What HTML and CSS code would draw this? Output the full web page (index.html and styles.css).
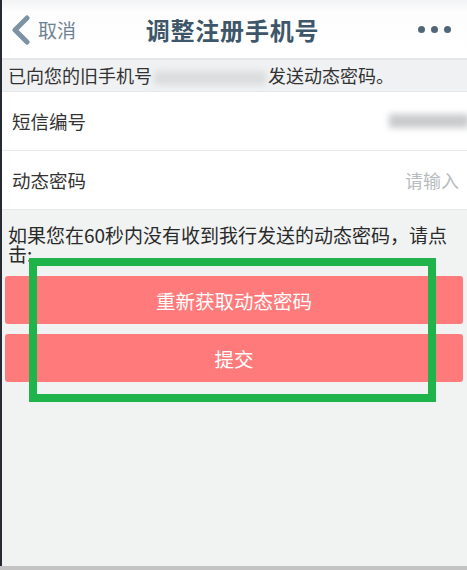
FILE: index.html
```html
<!DOCTYPE html>
<html lang="zh-CN">
<head>
    <meta charset="UTF-8">
    <meta name="viewport" content="width=device-width, initial-scale=1.0">
    <title>调整注册手机号</title>
    <link rel="stylesheet" href="styles.css">
</head>
<body>
    <div class="screen">
        <div class="navbar">
            <div class="nav-back">
                <svg class="chevron" width="22" height="30" viewBox="0 0 22 30">
                    <path d="M17 3 L5 15 L17 27" fill="none" stroke="#7d93a3" stroke-width="5" stroke-linecap="round" stroke-linejoin="round"/>
                </svg>
                <span>取消</span>
            </div>
            <div class="nav-title">调整注册手机号</div>
            <div class="nav-more"><i></i><i></i><i></i></div>
        </div>

        <div class="notice">已向您的旧手机号<span class="mask mask-phone"></span>发送动态密码。</div>

        <div class="form">
            <div class="row">
                <span class="label">短信编号</span>
                <span class="mask mask-code"></span>
            </div>
            <div class="row">
                <span class="label">动态密码</span>
                <span class="placeholder">请输入</span>
            </div>
        </div>

        <p class="tip">如果您在60秒内没有收到我行发送的动态密码，请点击:</p>

        <div class="actions">
            <button class="btn">重新获取动态密码</button>
            <button class="btn">提交</button>
        </div>

        <div class="highlight"></div>
    </div>
    <div class="bottom-bar"></div>
</body>
</html>
```

FILE: styles.css
```css
body { margin: 0; font-family: "Noto Sans CJK SC", "Noto Sans", sans-serif; background: #f1f2f2; color: #333; }
.screen { position: relative; height: 566px; border-left: 2px solid #262a33; background: #f1f2f2; overflow: hidden; }
.bottom-bar { height: 4px; background: #c3c3c3; }

.navbar { height: 58px; display: flex; align-items: center; justify-content: space-between; background: linear-gradient(#f2f3f4, #fdfdfd 12px, #fff); border-bottom: 2px solid #e4e7ea; padding: 0 12px 0 8px; }
.nav-back { display: flex; align-items: center; gap: 6px; color: #6e8392; font-size: 19px; width: 100px; }
.chevron { margin-top: 1px; }
.nav-title { font-size: 24px; font-weight: bold; color: #3d5669; letter-spacing: 0.8px; margin-left: 4px; }
.nav-more { width: 100px; display: flex; justify-content: flex-end; gap: 6px; padding-right: 4px; }
.nav-more i { width: 7px; height: 7px; border-radius: 50%; background: #506779; }

.notice { height: 31px; line-height: 30px; font-size: 18px; padding-left: 6px; background: #f0f1f2; border-bottom: 1px solid #e6e8e9; white-space: nowrap; }
.mask { display: inline-block; vertical-align: middle; background: #d2d4d6; filter: blur(3px); }
.mask-phone { width: 112px; height: 14px; margin: 0 2px; opacity: 0.7; }
.mask-code { width: 80px; height: 14px; background: #c9cbcd; margin-right: -10px; }

.form { background: #fff; border-bottom: 1px solid #e6e8e9; }
.row { height: 58px; display: flex; align-items: center; justify-content: space-between; padding: 0 8px 0 10px; font-size: 18.5px; }
.row + .row { border-top: 1px solid #e8eaeb; }
.placeholder { color: #b9bcbe; font-size: 18px; }

.tip { margin: 0; padding: 15px 16px 0 6px; font-size: 19px; line-height: 19px; color: #2a2a2a; }

.actions { display: flex; flex-direction: column; gap: 10px; padding: 13px 4px 0 3px; }
.btn { height: 48px; border: none; border-radius: 3px; background: #ff7b7b; color: #fff; font-family: inherit; font-size: 19.5px; padding: 0; }

.highlight { position: absolute; left: 27px; top: 258px; width: 391px; height: 128px; border: 8px solid #1fb34b; }
```
